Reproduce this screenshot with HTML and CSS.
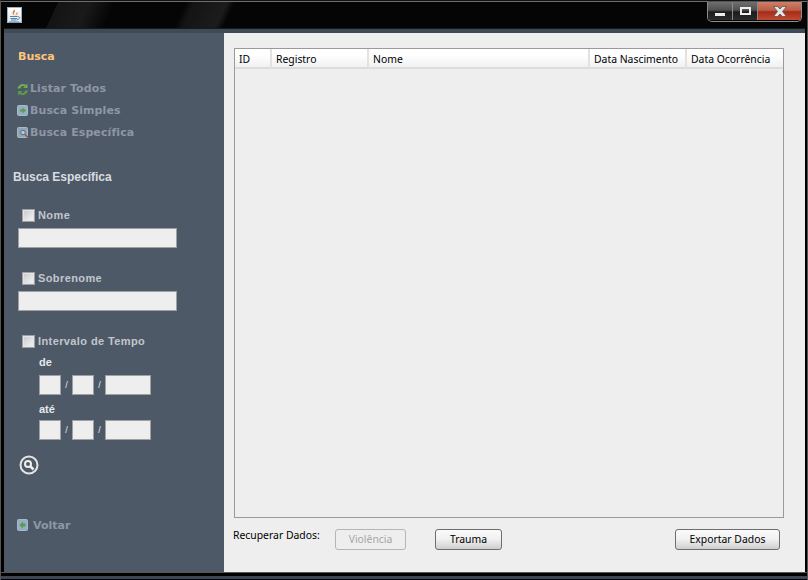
FILE: index.html
```html
<!DOCTYPE html>
<html lang="en">
<head>
  <meta charset="UTF-8" />
  <title>Busca</title>
  <link rel="stylesheet" href="styles.css">
</head>
<body>
  <div class="window">
    <div class="titlebar">
      <div class="app-icon">
        <svg width="13" height="14" viewBox="0 0 13 14">
          <path d="M6.500 0.500 C8.500 2.500 4.500 3.500 6.500 6.500 C4.500 5.500 3.500 3.500 6.500 0.500Z" fill="#e8792b"/>
          <path d="M8.500 2.500 C9.500 4.500 7.500 5 7.500 6.500 C9.500 5.500 10.500 4.500 8.500 2.500Z" fill="#e8792b"/>
          <path d="M2 7.500 H9.500 M2.500 9.500 H9 M3 11 H8.500" stroke="#5b82a8" stroke-width="1"/>
          <path d="M9.500 7.500 C12.500 7.500 12.500 10 9 10.500" stroke="#5b82a8" fill="none"/>
          <path d="M1 13 H11.500" stroke="#5b82a8"/>
        </svg>
      </div>
      <div class="controls">
        <div class="ctl ctl-min"><span class="glyph-min"></span></div>
        <div class="ctl ctl-max"><span class="glyph-max"></span></div>
        <div class="ctl ctl-close">
          <svg width="14" height="11" viewBox="0 0 14 11">
            <path d="M0.500 0.500 H4.500 L7 3 L9.500 0.500 H13.500 L9.500 5.500 L13.500 10.500 H9.500 L7 8 L4.500 10.500 H0.500 L4.500 5.500Z" fill="#e6e6e6" stroke="#4a4a4a" stroke-width="0.7"/>
          </svg>
        </div>
      </div>
    </div>
    <div class="band"></div>

    <div class="main">
      <aside class="sidebar">
        <div class="side-title">Busca</div>

        <ul class="menu">
          <li>
            <svg class="menu-icon" width="12" height="13" viewBox="0 0 12 13">
              <path d="M0.500 5.500 C1 2 6 -0.500 9 2 L10.500 0.500 V5 H6 L7.800 3.500 C6 2.500 3.800 3.300 3.300 5.500Z" fill="#6fae4e"/>
              <path d="M11 7.500 C10.500 11 5.500 13.500 2.500 11 L1 12.500 V8 H5.500 L3.700 9.500 C5.500 10.500 7.700 9.700 8.200 7.500Z" fill="#5c9a45"/>
            </svg>
            Listar Todos
          </li>
          <li>
            <svg class="menu-icon" width="12" height="12" viewBox="0 0 12 12">
              <rect x="0.500" y="0.500" width="10" height="10" rx="1" fill="#8fb0c6" stroke="#a9b8c4"/>
              <path d="M3 4.500 H5.500 V2.500 L9 5.500 L5.500 8.500 V6.500 H3Z" fill="#5c9a45"/>
            </svg>
            Busca Simples
          </li>
          <li>
            <svg class="menu-icon" width="12" height="12" viewBox="0 0 12 12">
              <rect x="0.500" y="0.500" width="10" height="10" rx="1" fill="#8fa6ba" stroke="#a9b8c4"/>
              <circle cx="6" cy="5.500" r="2.300" fill="#b8c8d4" stroke="#5d6a78"/>
              <path d="M8 7.500 L10.500 10" stroke="#8a5a3c" stroke-width="1.500"/>
            </svg>
            Busca Específica
          </li>
        </ul>

        <div class="section-title">Busca Específica</div>

        <form class="filters">
          <div class="check-row"><span class="check"></span>Nome</div>
          <div class="text-field"></div>

          <div class="check-row"><span class="check"></span>Sobrenome</div>
          <div class="text-field"></div>

          <div class="check-row"><span class="check"></span>Intervalo de Tempo</div>

          <div class="date-label">de</div>
          <div class="date-row">
            <span class="date-box day"></span><span class="slash">/</span>
            <span class="date-box day"></span><span class="slash">/</span>
            <span class="date-box year"></span>
          </div>

          <div class="date-label">até</div>
          <div class="date-row date-row-end">
            <span class="date-box day"></span><span class="slash">/</span>
            <span class="date-box day"></span><span class="slash">/</span>
            <span class="date-box year"></span>
          </div>

          <div class="search-btn">
            <svg width="20" height="20" viewBox="0 0 20 20">
              <circle cx="10" cy="10" r="8.500" fill="none" stroke="#e4e4e4" stroke-width="2"/>
              <circle cx="9" cy="9" r="3" fill="none" stroke="#eee" stroke-width="2"/>
              <path d="M11.500 11.500 L14.500 14.500" stroke="#eee" stroke-width="2.500"/>
            </svg>
          </div>
        </form>

        <div class="back">
          <svg class="menu-icon" width="12" height="13" viewBox="0 0 12 13">
            <rect x="0.500" y="0.500" width="10" height="11" rx="1" fill="#8fb0c6" stroke="#a9b8c4"/>
            <path d="M8.500 4.500 H6 V2.500 L2.500 6 L6 9.500 V7.500 H8.500Z" fill="#5c9a45"/>
          </svg>
          Voltar
        </div>
      </aside>

      <section class="content">
        <div class="table">
          <div class="thead">
            <div class="th col-id">ID</div>
            <div class="th col-reg">Registro</div>
            <div class="th col-nome">Nome</div>
            <div class="th col-nasc">Data Nascimento</div>
            <div class="th col-oco">Data Ocorrência</div>
          </div>
        </div>
        <div class="actions">
          <span class="recover-label">Recuperar Dados:</span>
          <button type="button" class="btn btn-violencia" disabled>Violência</button>
          <button type="button" class="btn btn-trauma">Trauma</button>
          <button type="button" class="btn btn-export">Exportar Dados</button>
        </div>
      </section>
    </div>
    <div class="frame-bottom"></div>
  </div>
</body>
</html>
```

FILE: styles.css
```css
body {
  margin: 0;
  background: #fff;
  font-family: "DejaVu Sans", sans-serif;
}

.window {
  width: 808px;
  height: 580px;
  box-sizing: border-box;
  display: flex;
  flex-direction: column;
  background: #000;
  border-top: 1px solid #111;
  border-left: 1px solid #555;
  border-right: 1px solid #555;
  overflow: hidden;
}

/* title bar */
.titlebar {
  height: 27px;
  box-sizing: border-box;
  display: flex;
  justify-content: space-between;
  align-items: flex-start;
  border-top: 1px solid #6e6e6e;
  background:
    linear-gradient(115deg, transparent 52px, #141414 52px, #1a1a1a 80px, transparent 104px, transparent 168px, #141414 175px, #1c1c1c 205px, transparent 212px),
    #050505;
}

.app-icon {
  width: 13px;
  height: 14px;
  margin: 5px 0 0 6px;
  background: linear-gradient(#fff, #dfe6ee);
  border: 1px solid #9fb2c6;
}

.controls {
  display: flex;
  height: 19px;
  margin: -1px 5px 0 0;
  border: 1px solid #8c8c8c;
  border-top-color: #555;
  border-radius: 0 0 5px 5px;
  overflow: hidden;
}

.ctl {
  height: 18px;
  display: flex;
  align-items: center;
  justify-content: center;
  background: linear-gradient(#6f6f6f 0, #505050 45%, #1c1c1c 55%, #2c2c2c 100%);
  border-right: 1px solid #8a8a8a;
}

.ctl-min { width: 24px; }
.ctl-max { width: 24px; }
.ctl-close {
  width: 43px;
  border-right: 0;
  background: linear-gradient(#cf7f68 0, #bb5f48 45%, #a52c18 55%, #c24b32 100%);
}

.glyph-min {
  width: 10px;
  height: 3px;
  margin-top: 6px;
  background: #eee;
}

.glyph-max {
  width: 7px;
  height: 4px;
  border: 2px solid #eee;
}

.band {
  height: 5px;
  box-sizing: border-box;
  border-top: 1px solid #1a1a1a;
  margin: 0 2px 0 3px;
  background: #3f4a58;
}

.main {
  flex: 1;
  display: flex;
  margin: 0 2px 0 3px;
  min-height: 0;
}

.frame-bottom {
  height: 8px;
  background: linear-gradient(#555 0 1px, #000 1px 4px, #3d4654 4px 7px, #000 7px);
}

/* left column */
.sidebar {
  width: 220px;
  box-sizing: border-box;
  background: #4e5968;
  padding: 17px 0 0 0;
  flex-shrink: 0;
}

.side-title {
  margin-left: 14px;
  height: 14px;
  line-height: 14px;
  font-size: 11px;
  font-weight: bold;
  color: #fdc67c;
}

.menu {
  list-style: none;
  margin: 14px 0 0 0;
  padding: 0;
}

.menu li {
  height: 22px;
  line-height: 22px;
  margin-left: 13px;
  display: flex;
  align-items: center;
  font-size: 11px;
  font-weight: bold;
  letter-spacing: 0.1px;
  color: #8e97a2;
}

.menu-icon {
  margin-right: 1px;
  flex-shrink: 0;
}

.section-title {
  margin: 25px 0 0 9px;
  height: 16px;
  line-height: 16px;
  font-family: "Liberation Sans", sans-serif;
  font-size: 12px;
  font-weight: bold;
  color: #d9dce0;
}

.filters {
  margin: 0;
  padding: 0 0 0 14px;
}

.check-row {
  display: flex;
  align-items: center;
  margin: 23px 0 0 4px;
  height: 14px;
  line-height: 14px;
  font-family: "Liberation Sans", sans-serif;
  font-size: 11px;
  font-weight: bold;
  letter-spacing: 0.4px;
  color: #c2c6cb;
}

.check {
  width: 11px;
  height: 11px;
  margin-right: 3px;
  border: 1px solid #a0a0a0;
  background: linear-gradient(135deg, #c4c9d0, #f6f6f6);
  box-shadow: inset 0 0 0 1px #e4e4e4;
}

.text-field {
  width: 157px;
  height: 18px;
  margin-top: 6px;
  border: 1px solid #a0a0a0;
  background: #eee;
}

.date-label {
  margin: 8px 0 0 21px;
  height: 13px;
  line-height: 13px;
  font-family: "Liberation Sans", sans-serif;
  font-size: 11px;
  font-weight: bold;
  color: #e6e8ea;
}

.date-row {
  display: flex;
  align-items: center;
  margin: 6px 0 0 21px;
  height: 20px;
}

.date-row-end { margin-top: 4px; }

.date-box {
  height: 18px;
  border: 1px solid #a0a0a0;
  background: #eee;
}

.day { width: 20px; }
.year { width: 44px; }

.slash {
  width: 11px;
  text-align: center;
  font-family: "Liberation Sans", sans-serif;
  font-size: 9px;
  color: #e6e8ea;
}

.search-btn {
  margin: 15px 0 0 1px;
  height: 20px;
}

.back {
  display: flex;
  align-items: center;
  margin: 42px 0 0 13px;
  height: 16px;
  font-size: 11px;
  font-weight: bold;
  color: #8e97a2;
}

.back .menu-icon { margin-right: 4px; }

/* right column */
.content {
  flex: 1;
  display: flex;
  flex-direction: column;
  background: #eee;
  padding: 15px 21px 0 10px;
  font-family: "Noto Sans", sans-serif;
  font-size: 10.4px;
  color: #000;
}

.table {
  height: 470px;
  box-sizing: border-box;
  border: 1px solid #9a9a9a;
}

.thead {
  display: flex;
  height: 20px;
  box-sizing: border-box;
}

.th {
  box-sizing: border-box;
  height: 20px;
  line-height: 20px;
  padding-left: 4px;
  border-right: 2px solid #e2e2e2;
  border-bottom: 2px solid #dcdcdc;
  background: linear-gradient(#fff, #fff 30%, #f0f1f3);
}

.col-id { width: 37px; }
.col-reg { width: 97px; }
.col-nome { width: 221px; }
.col-nasc { width: 97px; }
.col-oco { flex: 1; border-right: 0; }

.actions {
  display: flex;
  align-items: flex-start;
  margin: 11px 4px 0 -1px;
}

.recover-label {
  width: 102px;
  height: 13px;
  line-height: 13px;
}

.btn {
  height: 21px;
  box-sizing: border-box;
  padding: 0 0 1px 0;
  border: 1px solid #6e6e6e;
  border-radius: 3px;
  font-family: inherit;
  font-size: 10.4px;
  color: #000;
  background: linear-gradient(#fafafa, #f2f2f2 45%, #cfcfcf 100%);
}

.btn-violencia {
  width: 71px;
  border-color: #b3b6b9;
  background: #eee;
  color: #a6a6a6;
}

.btn-trauma {
  width: 67px;
  margin-left: 29px;
}

.btn-export {
  width: 105px;
  margin-left: auto;
}
```
